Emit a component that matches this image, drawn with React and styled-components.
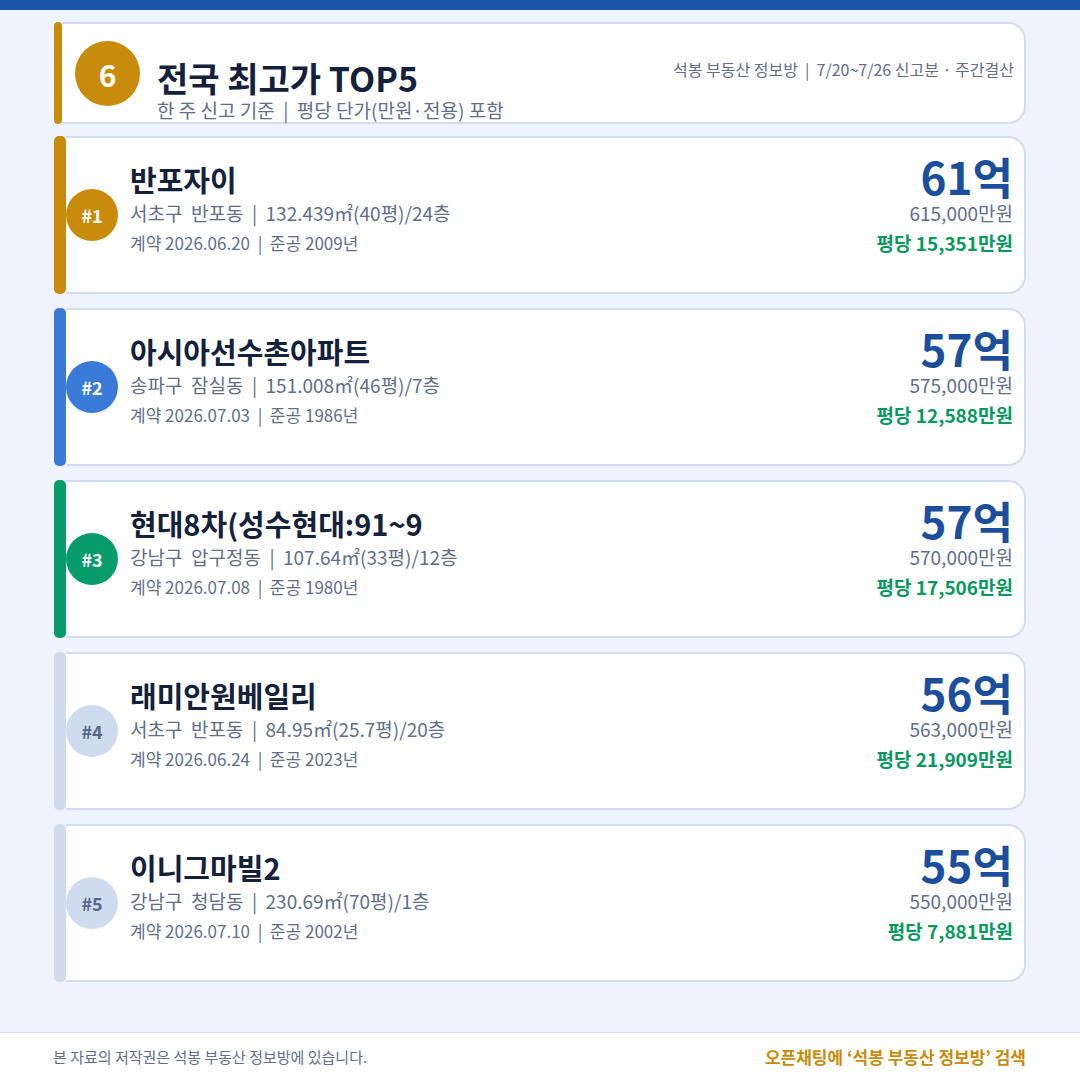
import React from "react";
import styled, { createGlobalStyle } from "styled-components";

const ranks = [
  {
    rank: 1,
    tone: "gold",
    name: "반포자이",
    area: "서초구  반포동",
    spec: "132.439㎡(40평)/24층",
    deal: "2026.06.20",
    built: "2009년",
    eok: "61억",
    won: "615,000만원",
    per: "평당 15,351만원",
  },
  {
    rank: 2,
    tone: "blue",
    name: "아시아선수촌아파트",
    area: "송파구  잠실동",
    spec: "151.008㎡(46평)/7층",
    deal: "2026.07.03",
    built: "1986년",
    eok: "57억",
    won: "575,000만원",
    per: "평당 12,588만원",
  },
  {
    rank: 3,
    tone: "green",
    name: "현대8차(성수현대:91~9",
    area: "강남구  압구정동",
    spec: "107.64㎡(33평)/12층",
    deal: "2026.07.08",
    built: "1980년",
    eok: "57억",
    won: "570,000만원",
    per: "평당 17,506만원",
  },
  {
    rank: 4,
    tone: "gray",
    name: "래미안원베일리",
    area: "서초구  반포동",
    spec: "84.95㎡(25.7평)/20층",
    deal: "2026.06.24",
    built: "2023년",
    eok: "56억",
    won: "563,000만원",
    per: "평당 21,909만원",
  },
  {
    rank: 5,
    tone: "gray",
    name: "이니그마빌2",
    area: "강남구  청담동",
    spec: "230.69㎡(70평)/1층",
    deal: "2026.07.10",
    built: "2002년",
    eok: "55억",
    won: "550,000만원",
    per: "평당 7,881만원",
  },
];

const tones = {
  gold: { bg: "#c98b0b", fg: "#ffffff" },
  blue: { bg: "#3a7bd8", fg: "#ffffff" },
  green: { bg: "#089c6a", fg: "#ffffff" },
  gray: { bg: "#cfdbef", fg: "#56698a" },
};

const GlobalStyle = createGlobalStyle`
  html, body {
    margin: 0;
    padding: 0;
    background: #eef3fd;
  }
  body {
    font-family: "Noto Sans CJK KR", "Noto Sans", sans-serif;
    color: #14213d;
  }
`;

const Page = styled.div`
  width: 1080px;
  height: 1080px;
  display: flex;
  flex-direction: column;
  background: #eef3fd;
  overflow: hidden;
`;

const TopBar = styled.div`
  height: 10px;
  background: #1b55a5;
  flex-shrink: 0;
`;

const Main = styled.main`
  flex: 1;
  padding: 12px 54px 0;
  display: flex;
  flex-direction: column;
`;

const List = styled.div`
  display: flex;
  flex-direction: column;
  gap: 14px;
  margin-top: 12px;
`;

const Card = styled.div`
  display: flex;
  height: ${(p) => p.$h}px;
`;

const Accent = styled.div`
  width: ${(p) => p.$w}px;
  flex-shrink: 0;
  border-radius: 5px;
  background: ${(p) => p.$color};
`;

const Body = styled.div`
  flex: 1;
  display: flex;
  align-items: flex-start;
  background: #ffffff;
  border: 2px solid #d3ddf1;
  border-left: none;
  border-radius: 0 18px 18px 0;
`;

/* header card */
const NumBadge = styled.div`
  width: 65px;
  height: 65px;
  margin: 17px 0 0 13px;
  border-radius: 50%;
  background: #c98b0b;
  color: #fff;
  display: flex;
  align-items: center;
  justify-content: center;
  font-size: 30px;
  font-weight: 700;
  flex-shrink: 0;
`;

const HeadText = styled.div`
  flex: 1;
  padding: 32px 0 0 17px;
  display: flex;
  flex-direction: column;
`;

const Title = styled.div`
  font-size: 34px;
  line-height: 43px;
  font-weight: 700;
  color: #14213d;
`;

const Subtitle = styled.div`
  font-size: 19px;
  line-height: 22px;
  color: #5f6f89;
  white-space: pre;
`;

const Meta = styled.div`
  padding: 35px 10px 0 0;
  font-size: 16px;
  line-height: 20px;
  color: #5f6f89;
  white-space: pre;
`;

/* ranking cards */
const RankBadge = styled.div`
  width: 52px;
  height: 52px;
  margin-top: 51px;
  border-radius: 50%;
  background: ${(p) => tones[p.$tone].bg};
  color: ${(p) => tones[p.$tone].fg};
  display: flex;
  align-items: center;
  justify-content: center;
  font-size: 18px;
  font-weight: 700;
  flex-shrink: 0;
`;

const Info = styled.div`
  flex: 1;
  padding: 22px 0 0 12px;
  display: flex;
  flex-direction: column;
`;

const Name = styled.div`
  font-size: 29px;
  line-height: 38px;
  font-weight: 700;
  color: #14213d;
`;

const Line = styled.div`
  font-size: ${(p) => p.$size}px;
  line-height: 30px;
  color: #5f6f89;
  white-space: pre;
`;

const Price = styled.div`
  padding: 12px 11px 0 0;
  display: flex;
  flex-direction: column;
  align-items: flex-end;
`;

const Eok = styled.div`
  font-size: 44px;
  line-height: 52px;
  font-weight: 700;
  color: #1b4f9d;
`;

const Won = styled.div`
  font-size: 19px;
  line-height: 22px;
  color: #5f6f89;
`;

const Per = styled.div`
  font-size: 19px;
  line-height: 38px;
  font-weight: 700;
  color: #07995f;
`;

const Footer = styled.footer`
  height: 47px;
  flex-shrink: 0;
  background: #ffffff;
  border-top: 1px solid #d3ddf1;
  padding: 0 54px 0 53px;
  display: flex;
  align-items: center;
  justify-content: space-between;
`;

const Copy = styled.div`
  font-size: 15px;
  color: #5f6f89;
`;

const Cta = styled.div`
  font-size: 17px;
  font-weight: 700;
  color: #c98b0b;
`;

const Rank = ({ item }) => (
  <Card $h={158}>
    <Accent $w={12} $color={tones[item.tone].bg} />
    <Body>
      <RankBadge $tone={item.tone}>#{item.rank}</RankBadge>
      <Info>
        <Name>{item.name}</Name>
        <Line $size={19}>
          {item.area}{"  |  "}{item.spec}
        </Line>
        <Line $size={17}>
          계약 {item.deal}{"  |  "}준공 {item.built}
        </Line>
      </Info>
      <Price>
        <Eok>{item.eok}</Eok>
        <Won>{item.won}</Won>
        <Per>{item.per}</Per>
      </Price>
    </Body>
  </Card>
);

export default function App() {
  return (
    <Page>
      <GlobalStyle />
      <TopBar />
      <Main>
        <Card $h={102}>
          <Accent $w={8} $color="#c98b0b" />
          <Body>
            <NumBadge>6</NumBadge>
            <HeadText>
              <Title>전국 최고가 TOP5</Title>
              <Subtitle>한 주 신고 기준  |  평당 단가(만원·전용) 포함</Subtitle>
            </HeadText>
            <Meta>석봉 부동산 정보방  |  7/20~7/26 신고분 · 주간결산</Meta>
          </Body>
        </Card>
        <List>
          {ranks.map((item) => (
            <Rank key={item.rank} item={item} />
          ))}
        </List>
      </Main>
      <Footer>
        <Copy>본 자료의 저작권은 석봉 부동산 정보방에 있습니다.</Copy>
        <Cta>오픈채팅에 ‘석봉 부동산 정보방’ 검색</Cta>
      </Footer>
    </Page>
  );
}
